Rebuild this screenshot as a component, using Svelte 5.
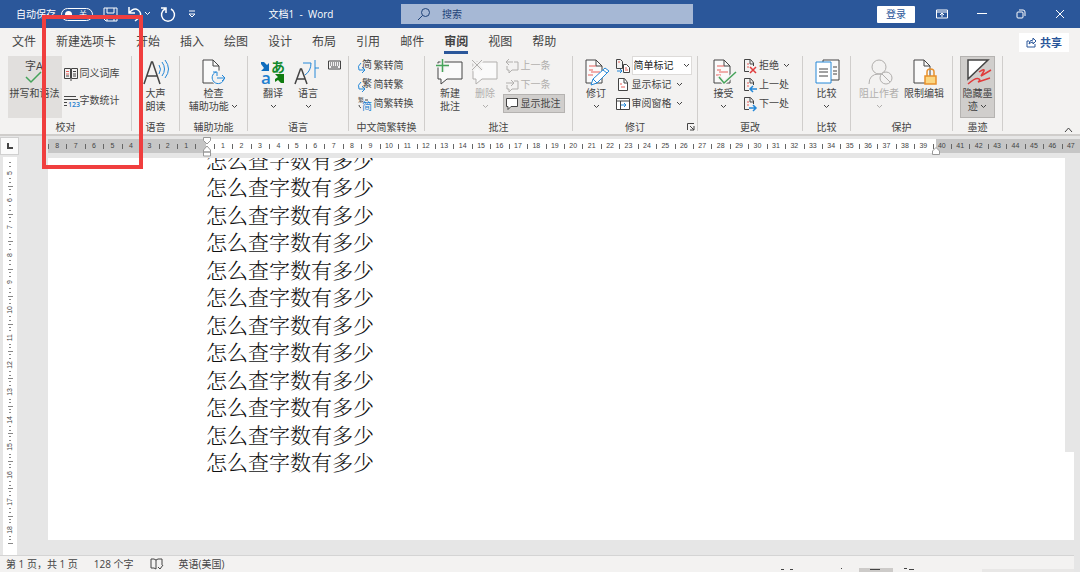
<script lang="ts">
	const tabs = ['文件', '新建选项卡', '开始', '插入', '绘图', '设计', '布局', '引用', '邮件', '审阅', '视图', '帮助'];

	// ruler runs from 8 characters left of the margin to 47 right of it
	const columns = Array.from({ length: 56 }, (_, i) => i - 8);
	const rows = Array.from({ length: 14 }, (_, i) => i + 5);
	const lines = Array.from({ length: 12 }, () => '怎么查字数有多少');

	let activeTab = $state('审阅');
	let autoSave = $state(false);
	let query = $state('');
	let markup = $state('简单标记');
</script>

{#snippet chevron()}
	<svg class="chevron" width="7" height="5" viewBox="0 0 7 5"><path d="M1 1l2.500 2.500L6 1" /></svg>
{/snippet}

{#snippet sheet()}
	<path d="M1 1h10l6 6v17H1z" fill="#fafafa" />
	<path d="M11 1v6h6" />
{/snippet}

{#snippet icon(name: string)}
	<svg class="icon" width="28" height="28" viewBox="0 0 28 28">
		{#if name === 'spell'}
			<text x="4" y="12" font-size="11">字A</text>
			<path d="M5 19l5 5L20 14" class="green" />
		{:else if name === 'read'}
			<path d="M2 26L9.500 4h1L18 26M5 18h10" stroke-width="1.500" />
			<path d="M17 7q3 4 0 9M20 4q5 7 0 14M23 2q7 9 0 18" class="blue" />
		{:else if name === 'access'}
			<g transform="translate(3 1)">{@render sheet()}</g>
			<circle cx="20" cy="20" r="7.500" fill="#f3f2f1" stroke="none" />
			<path d="M17 14a6 6 0 1 0 8 7M14 14h4v4M18 20h8M23 17l3 3-3 3" class="blue" />
		{:else if name === 'translate'}
			<path d="M2 4h3l3 3 2-2v8H2l3-3-3-4z" class="fill-blue" />
			<text x="2" y="26" font-size="17" class="t-blue heavy">a</text>
			<text x="12" y="14" font-size="14" class="t-green">あ</text>
			<path d="M25 25h-3l-3-3-3 2v-3l3-2-3-3h9z" class="fill-green" />
		{:else if name === 'language'}
			<path d="M1 26L6.500 11h1L13 26M3 21h8" stroke-width="1.500" />
			<path d="M9 5h8q0 8-6 12M21 2v18M21 10h4" class="blue" />
		{:else if name === 'comment' || name === 'delete'}
			<path d="M2 4h24v17H11l-6 5v-5H2z" fill="#fafafa" />
			{#if name === 'comment'}
				<path d="M0 7.500h13M6.500 1v13" stroke="#f3f2f1" stroke-width="4" />
				<path d="M0 7.500h13M6.500 1v13" class="green" />
			{:else}
				<path d="M1 2l10 10M11 2L1 12" stroke="#f3f2f1" stroke-width="4" />
				<path d="M1 2l10 10M11 2L1 12" />
			{/if}
		{:else if name === 'track' || name === 'accept'}
			<g transform="translate(3 1)">{@render sheet()}</g>
			<path d="M7 8h7M7 12h4M9 14h9M6 17h5" class="red" />
			{#if name === 'track'}
				<path d="M9 27l2-6L23 10l4 3-12 12z" class="blue" fill="#fff" />
				<path d="M21 12l4 3M11 21l4 4" class="blue" />
			{:else}
				<path d="M8 18l6 7L26 14" stroke="#f3f2f1" stroke-width="4" />
				<path d="M9 19l5 6L26 14" class="green" />
			{/if}
		{:else if name === 'compare'}
			<path d="M10 2h16v20H10z" fill="#fafafa" />
			<path d="M20 9h4M20 13h4M20 16h4" />
			<path d="M3 4h15v21H3z" class="blue" fill="#fff" />
			<path d="M6 11h9M6 14h9M6 18h9" />
		{:else if name === 'block'}
			<circle cx="14" cy="9" r="7" />
			<path d="M4 26q0-10 10-10 3 0 5 2" />
			<circle cx="21" cy="20" r="6" fill="#f3f2f1" />
			<path d="M17 16l8 8" />
		{:else if name === 'restrict'}
			<g transform="translate(3 1)">{@render sheet()}</g>
			<path d="M15 18h11v8H15z" fill="#fbd782" class="orange" />
			<path d="M17 18v-4q0-3 3.500-3t3.500 3v4" class="orange" />
		{:else if name === 'ink'}
			<path d="M4 2h20L4 21z" fill="#fff" stroke-width="1.500" />
			<path d="M15 14q6-4 5-1l-3 5 10-6M4 26q8-7 11-5 2 1-1 3l12-4" class="red strong" />
		{/if}
	</svg>
{/snippet}

{#snippet small(name: string)}
	<svg class="icon" width="14" height="14" viewBox="0 0 14 14">
		{#if name === 'book'}
			<path d="M.5 1.500h6v10h-6zM7.500 1.500h6v10h-6zM2 9h3M9 4.500h3M9 7h3M9 9h3M7 12v2" />
			<path d="M2 4.500h3M2 7h3" class="red" />
		{:else if name === 'count'}
			<path d="M0 2.500h12M0 5.500h14M0 8.500h3M0 11.500h3" />
			<text x="4" y="13" font-size="7" class="t-blue heavy">123</text>
		{:else if name === 'simplify' || name === 'complicate'}
			<text x="4" y="9" font-size="10">{name === 'simplify' ? '简' : '繁'}</text>
			<path d="M3 4q-4 3-2 7h6M4 8l3 3-3 3" class="blue" />
		{:else if name === 'convert'}
			<text x="0" y="5" font-size="6">繁</text>
			<text x="4" y="13" font-size="10" class="t-blue">简</text>
			<path d="M1 8q0 2 2 3M7 3h3" />
		{:else if name === 'prev' || name === 'next'}
			<path d="M2 7v4h2v3l3-3h6V3H9" />
			{#if name === 'prev'}
				<path d="M8 3H1M4 0L1 3l3 3" />
			{:else}
				<path d="M1 5h7M6 2l3 3-3 3" />
			{/if}
		{:else if name === 'show'}
			<path d="M1.500 1.500h11v8H6l-3 3v-3H1.500z" fill="#fff" />
		{:else if name === 'display'}
			<path d="M.5.5h4l2 2v7h-6z" />
			<path d="M7.500 5.500h3l3 3v5h-6z" fill="#fff" />
			<path d="M9 9h2M9 11h3M2 3h2" class="red" />
			<path d="M1 12h5M4 10l2 2-2 2" class="blue" />
		{:else if name === 'markup'}
			<path d="M2.500.5h6l3 4v8h-9z" fill="#fff" />
			<path d="M8 1v4h4" />
			<path d="M4 6h2M5 9h4" class="red" />
		{:else if name === 'pane'}
			<path d="M.5 1.500h13v11H.5zM.5 4h13M4.500 4v8" fill="#fff" />
			<path d="M5 8h5M8 6l2 2-2 2" class="blue" />
		{:else}
			<path d="M10.500 7V4l-3-3.500h-6v12H6" />
			<path d="M7 1v4h4" />
			<path d="M4 5h2M4 8h2" class="red" />
			{#if name === 'reject'}
				<path d="M7 8l6 6M13 8l-6 6" class="red strong" />
			{:else if name === 'back'}
				<path d="M14 11H7M10 8l-3 3 3 3" class="blue thick" />
			{:else}
				<path d="M6 11h7M10 8l3 3-3 3" class="blue thick" />
			{/if}
		{/if}
	</svg>
{/snippet}

{#snippet row(name: string, label: string, more = false, disabled = false)}
	<button class="row" class:pressed={name === 'show'} {disabled}>
		{@render small(name)}
		<span>{label}</span>
		{#if more}{@render chevron()}{/if}
	</button>
{/snippet}

<div class="window">
	<header class="titlebar">
		<div class="quick">
			<label class="autosave">
				自动保存
				<input type="checkbox" bind:checked={autoSave} />
				<span class="switch"><i></i><b>{autoSave ? '开' : '关'}</b></span>
			</label>
			<button aria-label="保存">
				<svg width="15" height="15" viewBox="0 0 15 15"><path d="M1 1h13v13H3l-2-2zM4 1v5h7V1M4 14V9h7v5" /></svg>
			</button>
			<button aria-label="撤消">
				<svg width="24" height="16" viewBox="0 0 24 16"><path d="M2 1v6h6M2 7q5-6 9-3t2 7l-5 4" stroke-width="1.500" /><path d="M18 6l2.500 2.500L23 6" /></svg>
			</button>
			<button aria-label="重复">
				<svg width="16" height="16" viewBox="0 0 16 16"><path d="M1 2h5v5M5 3a6.500 6.500 0 1 0 6 0" stroke-width="1.500" /></svg>
			</button>
			<button class="customize" aria-label="自定义快速访问工具栏">
				<svg width="8" height="8" viewBox="0 0 8 8"><path d="M1 1h6M1 4l3 3 3-3z" /></svg>
			</button>
		</div>
		<div class="doc-name">文档1&nbsp; -&nbsp; Word</div>
		<label class="search">
			<svg width="14" height="14" viewBox="0 0 14 14"><circle cx="8.500" cy="5.500" r="4" /><path d="M5.500 8.500L1 13" /></svg>
			<input type="text" placeholder="搜索" aria-label="搜索" bind:value={query} />
		</label>
		<div class="window-controls">
			<button class="login">登录</button>
			<button aria-label="功能区显示选项">
				<svg width="12" height="10" viewBox="0 0 12 10"><path d="M.5 1h11v8H.5zM.5 3h11M6 8V4M4 6l2-2 2 2" /></svg>
			</button>
			<button aria-label="最小化"><svg width="10" height="10" viewBox="0 0 10 10"><path d="M0 4.500h10" /></svg></button>
			<button aria-label="向下还原">
				<svg width="10" height="10" viewBox="0 0 10 10"><rect x="1" y="3" width="6" height="6" rx="1" /><path d="M3 1h4q2 0 2 2v4" /></svg>
			</button>
			<button aria-label="关闭"><svg width="10" height="10" viewBox="0 0 10 10"><path d="M1 1l8 8M9 1L1 9" /></svg></button>
		</div>
	</header>

	<nav class="tabs">
		{#each tabs as tab}
			<button class="tab" class:active={tab === activeTab} onclick={() => (activeTab = tab)}>{tab}</button>
		{/each}
		<button class="share">
			<svg width="11" height="11" viewBox="0 0 11 11"><path d="M3 4H1v6h8V7M3 7q0-4 4-4V1l3 3-3 3V5q-2 0-4 2" /></svg>
			共享
		</button>
	</nav>

	<div class="ribbon">
		<section class="group">
			<div class="tools">
				<button class="big hover">{@render icon('spell')}<span>拼写和语法</span></button>
				<div class="stack loose">
					{@render row('book', '同义词库')}
					{@render row('count', '字数统计')}
				</div>
			</div>
			<h2>校对</h2>
		</section>
		<section class="group">
			<div class="tools">
				<button class="big">{@render icon('read')}<span>大声<br />朗读</span></button>
			</div>
			<h2>语音</h2>
		</section>
		<section class="group">
			<div class="tools">
				<button class="big">{@render icon('access')}<span>检查<br />辅助功能 {@render chevron()}</span></button>
			</div>
			<h2>辅助功能</h2>
		</section>
		<section class="group">
			<div class="tools">
				<button class="big">{@render icon('translate')}<span>翻译<br />{@render chevron()}</span></button>
				<button class="big">{@render icon('language')}<span>语言<br />{@render chevron()}</span></button>
				<button class="keyboard" aria-label="输入法">
					<svg class="icon" width="13" height="10" viewBox="0 0 13 10"><path d="M.5 1h12v8H.5zM2 3h1M4 3h1M6 3h1M8 3h1M10 3h1M2 5h1M4 5h1M6 5h1M8 5h1M10 5h1M3 7h7" /></svg>
				</button>
			</div>
			<h2>语言</h2>
		</section>
		<section class="group">
			<div class="tools">
				<div class="stack">
					{@render row('simplify', '繁转简')}
					{@render row('complicate', '简转繁')}
					{@render row('convert', '简繁转换')}
				</div>
			</div>
			<h2>中文简繁转换</h2>
		</section>
		<section class="group">
			<div class="tools">
				<button class="big">{@render icon('comment')}<span>新建<br />批注</span></button>
				<button class="big" disabled>{@render icon('delete')}<span>删除<br />{@render chevron()}</span></button>
				<div class="stack">
					{@render row('prev', '上一条', false, true)}
					{@render row('next', '下一条', false, true)}
					{@render row('show', '显示批注')}
				</div>
			</div>
			<h2>批注</h2>
		</section>
		<section class="group">
			<div class="tools">
				<button class="big">{@render icon('track')}<span>修订<br />{@render chevron()}</span></button>
				<div class="stack">
					<label class="row combo">
						{@render small('display')}
						<span class="select">
							<select bind:value={markup} aria-label="显示以供审阅">
								<option>简单标记</option>
								<option>所有标记</option>
								<option>无标记</option>
								<option>原始版本</option>
							</select>
							{@render chevron()}
						</span>
					</label>
					{@render row('markup', '显示标记', true)}
					{@render row('pane', '审阅窗格', true)}
				</div>
			</div>
			<h2>修订</h2>
			<button class="launcher" aria-label="修订选项">
				<svg class="icon" width="8" height="8" viewBox="0 0 8 8"><path d="M.5 7V.5H7M3 3l4 4M7 3v4H3" /></svg>
			</button>
		</section>
		<section class="group">
			<div class="tools">
				<button class="big">{@render icon('accept')}<span>接受<br />{@render chevron()}</span></button>
				<div class="stack">
					{@render row('reject', '拒绝', true)}
					{@render row('back', '上一处')}
					{@render row('forward', '下一处')}
				</div>
			</div>
			<h2>更改</h2>
		</section>
		<section class="group">
			<div class="tools">
				<button class="big">{@render icon('compare')}<span>比较<br />{@render chevron()}</span></button>
			</div>
			<h2>比较</h2>
		</section>
		<section class="group">
			<div class="tools">
				<button class="big wide" disabled>{@render icon('block')}<span>阻止作者<br />{@render chevron()}</span></button>
				<button class="big wide">{@render icon('restrict')}<span>限制编辑</span></button>
			</div>
			<h2>保护</h2>
		</section>
		<section class="group">
			<div class="tools">
				<button class="big pressed">{@render icon('ink')}<span>隐藏墨<br />迹 {@render chevron()}</span></button>
			</div>
			<h2>墨迹</h2>
		</section>
		<button class="collapse" aria-label="折叠功能区">
			<svg class="icon" width="9" height="6" viewBox="0 0 9 6"><path d="M1 5l3.500-4L8 5" /></svg>
		</button>
	</div>

	<div class="ruler-row">
		<button class="tab-stop" aria-label="左对齐式制表符">
			<svg width="6" height="6" viewBox="0 0 6 6"><path d="M1 0v5h5" /></svg>
		</button>
		<div class="ruler">
			{#each columns as n}
				<span>{n === 0 ? '' : Math.abs(n)}</span>
			{/each}
			<svg class="indent left" width="8" height="20" viewBox="0 0 8 20"><path d="M.5.5h7v3L4 7 .5 3.500zM4 9l3.500 4v2h-7v-2zM.5 15h7v4h-7z" /></svg>
			<svg class="indent right" width="8" height="8" viewBox="0 0 8 8"><path d="M4 .5L7.500 4v3.500h-7V4z" /></svg>
		</div>
	</div>

	<main class="workspace">
		<div class="v-ruler">
			{#each rows as n}
				<div class="v-cell"><i></i><i></i><span>{n}</span><i></i><i></i><i class="tick"></i></div>
			{/each}
		</div>
		<div class="page">
			<div class="text">
				{#each lines as line}
					<p>{line}</p>
				{/each}
			</div>
			<div class="page-foot"></div>
		</div>
	</main>

	<footer class="status">
		<span>第 1 页，共 1 页</span>
		<span>128 个字</span>
		<svg width="13" height="12" viewBox="0 0 13 12"><path d="M6 2L4 1H1v9h3l2 1V2l2-1h4v6M8 9l2 2 3-4" /></svg>
		<span>英语(美国)</span>
		<div class="views">
			<svg width="134" height="4" viewBox="0 0 134 4">
				<path d="M78 0h34v4H78z" fill="#cdcbc9" stroke="none" />
				<path d="M0 1.500h3M9 1.500h3M60 .5h1M89 1.500h10M123 .5h3M128 1.500h5" />
			</svg>
			<div class="zoom"></div>
		</div>
	</footer>

	<div class="marker"></div>
</div>

<style>
	:global(body) {
		background: #e6e6e6;
	}

	.window {
		position: relative;
		display: flex;
		flex-direction: column;
		height: 100vh;
		overflow: hidden;
		font: 10px/13px 'Open Sans', 'Noto Sans CJK SC', sans-serif;
		color: #444;
	}

	button,
	input,
	select {
		font: inherit;
		color: inherit;
		background: none;
		border: 0;
		padding: 0;
		margin: 0;
	}

	svg {
		display: block;
		flex-shrink: 0;
		overflow: visible;
		fill: none;
		stroke: currentColor;
	}

	/* Title bar */
	.titlebar {
		display: grid;
		grid-template-columns: 201px 200px 27% 1fr;
		align-items: center;
		height: 28px;
		flex-shrink: 0;
		background: #2b579a;
		color: #fff;
	}

	.quick {
		display: flex;
		align-items: center;
		gap: 9px;
		padding-left: 16px;
	}

	.autosave {
		display: flex;
		align-items: center;
		gap: 5px;
		white-space: nowrap;
	}

	.autosave input {
		position: absolute;
		opacity: 0;
	}

	.switch {
		display: flex;
		align-items: center;
		justify-content: space-between;
		box-sizing: border-box;
		width: 32px;
		height: 13px;
		padding: 0 5px 0 3px;
		margin-right: 1px;
		border: 1px solid #fff;
		border-radius: 7px;
	}

	.switch i {
		width: 7px;
		height: 7px;
		border-radius: 50%;
		background: #fff;
	}

	.switch b {
		font-size: 8px;
		font-weight: 400;
		line-height: 10px;
	}

	.customize {
		margin-left: 3px;
	}

	.doc-name {
		text-align: center;
	}

	.search {
		display: flex;
		align-items: center;
		gap: 11px;
		height: 20px;
		padding-left: 16px;
		background: #a6b8d5;
		color: #1f4379;
	}

	.search input {
		flex: 1;
		min-width: 0;
		outline: none;
	}

	.search input::placeholder {
		color: #1f4379;
		opacity: 1;
	}

	.window-controls {
		display: flex;
		align-items: center;
		justify-content: flex-end;
		gap: 29px;
		padding-right: 15px;
	}

	.login {
		width: 38px;
		height: 17px;
		margin-right: -8px;
		border-radius: 1px;
		background: #fff;
		color: #2b579a;
	}

	/* Tabs */
	.tabs {
		display: flex;
		align-items: center;
		gap: 20px;
		height: 28px;
		flex-shrink: 0;
		padding: 0 11px 0 12px;
		background: #f3f2f1;
		font-size: 12px;
	}

	.tab {
		height: 24px;
		padding-top: 2px;
		border-bottom: 3px solid transparent;
		line-height: 18px;
		white-space: nowrap;
	}

	.tab.active {
		border-color: #2b579a;
		font-weight: 700;
	}

	.share {
		display: flex;
		align-items: center;
		justify-content: center;
		gap: 3px;
		width: 50px;
		height: 19px;
		margin-left: auto;
		background: #fff;
		color: #2b579a;
		font-size: 11px;
		font-weight: 700;
	}

	/* Ribbon */
	.ribbon {
		position: relative;
		display: grid;
		grid-template-columns: 132px 48px 68px 101px 76px 148px 125px 105px 48px 102px 50px 1fr;
		height: 78px;
		flex-shrink: 0;
		background: #f3f2f1;
		border-bottom: 2px solid #cfcdcb;
	}

	.group {
		position: relative;
		display: flex;
		flex-direction: column;
		height: 75px;
		border-right: 1px solid #d0cecc;
	}

	.group h2 {
		flex-shrink: 0;
		margin: 3px 0 0;
		font-size: 10px;
		font-weight: 400;
		line-height: 13px;
		text-align: center;
	}

	.tools {
		display: flex;
		flex-shrink: 0;
		justify-content: center;
		height: 62px;
	}

	.big {
		display: flex;
		flex-direction: column;
		align-items: center;
		box-sizing: border-box;
		min-width: 35px;
		padding-top: 2px;
		white-space: nowrap;
	}

	.big > span {
		margin-top: 1px;
		line-height: 13px;
	}

	.big .chevron {
		display: inline-block;
		vertical-align: 1px;
	}

	.big.hover {
		padding: 2px 2px 0;
		background: #e1dfdd;
	}

	.big.wide {
		min-width: 45px;
	}

	.pressed {
		background: #d0cecc;
		outline: 1px solid #b5b3b1;
		outline-offset: -1px;
	}

	button:disabled {
		color: #b1afad;
	}

	.stack {
		display: flex;
		flex-direction: column;
	}

	.stack.loose {
		padding-top: 8px;
		gap: 8px;
	}

	.row {
		display: flex;
		align-items: center;
		gap: 2px;
		height: 19px;
		padding: 0 4px 0 2px;
		white-space: nowrap;
	}

	.row .chevron {
		margin-left: 2px;
	}

	.combo {
		padding-right: 0;
	}

	.select {
		display: flex;
		align-items: center;
		position: relative;
		height: 17px;
		border: 1px solid #dddbd9;
		background: #fff;
	}

	.select select {
		width: 58px;
		padding-left: 1px;
		appearance: none;
		color: #222;
	}

	.select .chevron {
		position: absolute;
		right: 1px;
		pointer-events: none;
	}

	.keyboard {
		align-self: flex-start;
		margin-top: 4px;
		margin-left: 2px;
	}

	.launcher {
		position: absolute;
		right: 2px;
		bottom: 0;
	}

	.collapse {
		position: absolute;
		right: 7px;
		bottom: 1px;
	}

	.icon text {
		fill: currentColor;
		stroke: none;
	}

	.icon .t-blue {
		fill: #1e7fd0;
	}

	.icon .t-green {
		fill: #138a2e;
		font-weight: 700;
	}

	.icon .heavy {
		font-weight: 600;
	}

	.fill-blue {
		fill: #0f6cbd;
		stroke: none;
	}

	.fill-green {
		fill: #107c10;
		stroke: none;
	}

	.blue {
		stroke: #2488d8;
	}

	.green {
		stroke: #45a35a;
		stroke-width: 1.5;
	}

	.red {
		stroke: #e8605c;
	}

	.strong {
		stroke: #e03c3c;
	}

	.strong,
	.thick {
		stroke-width: 1.5;
	}

	.orange {
		stroke: #e8912d;
		stroke-width: 1.5;
	}

	/* Rulers */
	.ruler-row {
		display: flex;
		align-items: center;
		height: 22px;
		margin-top: -1px;
		flex-shrink: 0;
	}

	.tab-stop {
		display: grid;
		place-items: center;
		width: 19px;
		height: 18px;
		margin-right: 29px;
		border: 1px solid #d0d0d0;
		background: #fafafa;
	}

	.tab-stop svg {
		stroke-width: 2;
	}

	.ruler {
		position: relative;
		display: grid;
		grid-template-columns: repeat(56, minmax(0, 1fr));
		flex: 1;
		height: 14px;
		background: linear-gradient(90deg, #c6c6c6 15.3%, #fff 15.3% 86%, #c6c6c6 86%);
		font: 7px/14px 'Liberation Sans', sans-serif;
		text-align: center;
	}

	.ruler span {
		background: linear-gradient(#666, #666) 0 50% / 1px 5px no-repeat;
	}

	.indent {
		position: absolute;
		fill: #fff;
		stroke: #999;
	}

	.indent.left {
		left: 15%;
		top: -2px;
	}

	.indent.right {
		left: 86%;
		bottom: -2px;
		transform: translateX(-50%);
	}

	/* Document */
	.workspace {
		display: flex;
		flex: 1;
		min-height: 0;
		background: #e6e6e6;
	}

	.v-ruler {
		display: grid;
		grid-auto-rows: 1fr;
		width: 14px;
		margin-left: 3px;
		padding: 5px 0 9px;
		background: #fff;
		font: 7px/8px 'Liberation Sans', sans-serif;
	}

	.v-cell {
		display: flex;
		flex-direction: column;
		align-items: center;
		justify-content: space-between;
		padding-bottom: 2px;
	}

	.v-cell span {
		writing-mode: vertical-rl;
		transform: rotate(180deg);
	}

	.v-cell i {
		width: 2px;
		height: 1px;
		background: #888;
	}

	.v-cell i.tick {
		width: 5px;
	}

	.page {
		display: flex;
		flex-direction: column;
		flex: 1;
		margin: 1px 6px 15px 31px;
		overflow: hidden;
	}

	/* scrolled so that the first line is half out of view */
	.text {
		display: flex;
		flex-direction: column;
		justify-content: space-between;
		flex: 1;
		min-height: 0;
		margin-right: 9px;
		padding-left: 158px;
		background: #fff;
		color: #111;
		font: 300 21px/27px SimSun, 'Noto Serif CJK SC', 'Noto Sans CJK SC', serif;
	}

	.text p {
		position: relative;
		margin: 0;
	}

	.text p:first-child {
		margin-top: -12px;
	}

	.text p:last-child {
		margin-bottom: -23px;
	}

	.page-foot {
		height: 88px;
		background: #fff;
	}

	/* Status bar */
	.status {
		display: flex;
		align-items: center;
		gap: 16px;
		height: 16px;
		flex-shrink: 0;
		margin-right: 6px;
		padding-left: 6px;
		border-top: 1px solid #d4d4d4;
		background: #f3f2f1;
	}

	.views {
		display: flex;
		align-items: flex-end;
		align-self: flex-end;
		gap: 67px;
		margin-left: auto;
	}

	.zoom {
		width: 92px;
		height: 3px;
		background: #e8e7e6;
	}

	.marker {
		position: absolute;
		left: 42px;
		top: 15px;
		width: 93px;
		height: 146px;
		border: 4px solid #f03e3e;
		pointer-events: none;
	}
</style>
